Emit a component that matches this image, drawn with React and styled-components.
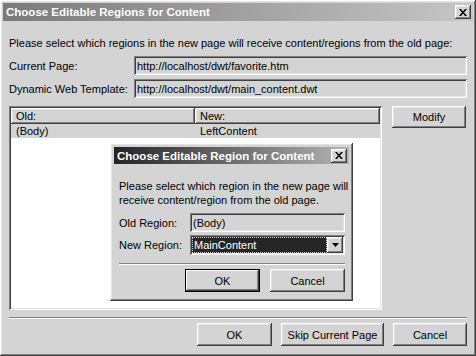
import React from 'react'
import styled, { createGlobalStyle, css } from 'styled-components'

const GlobalStyle = createGlobalStyle`
	html, body {
		margin: 0;
		padding: 0;
		background: #d4d4d4;
	}
	* {
		box-sizing: border-box;
	}
`

const raised = css`
	box-shadow: inset -1px -1px #404040, inset 1px 1px #ffffff,
		inset -2px -2px #808080, inset 2px 2px #e4e4e4;
`

const sunken = css`
	box-shadow: inset 1px 1px #808080, inset -1px -1px #ffffff,
		inset 2px 2px #404040, inset -2px -2px #e4e4e4;
`

const Window = styled.div`
	position: relative;
	width: 476px;
	height: 356px;
	padding: 3px;
	background: #d4d4d4;
	font-family: 'Liberation Sans', Arial, sans-serif;
	font-size: 11px;
	color: #000;
	display: flex;
	flex-direction: column;
	${raised};
`

const TitleBar = styled.div`
	height: ${(p) => p.$height}px;
	flex-shrink: 0;
	display: flex;
	align-items: center;
	justify-content: space-between;
	padding: 0 2px 0 3px;
	background: linear-gradient(to right, ${(p) => p.$from}, ${(p) => p.$to});
	color: #fff;
	font-weight: bold;
	font-size: 11.5px;
`

const CloseButton = styled.div`
	width: 16px;
	height: 14px;
	background: #d4d4d4;
	display: flex;
	align-items: center;
	justify-content: center;
	${raised};
`

const Body = styled.div`
	flex: 1;
	display: flex;
	flex-direction: column;
	padding: 0 6px;
`

const Intro = styled.div`
	margin-top: ${(p) => p.$top}px;
	line-height: 14px;
	white-space: nowrap;
`

const FieldRow = styled.div`
	display: grid;
	grid-template-columns: ${(p) => p.$label}px 1fr;
	align-items: center;
	height: ${(p) => p.$height}px;
	margin-top: ${(p) => p.$top}px;
`

const Field = styled.div`
	height: 100%;
	display: flex;
	align-items: center;
	padding: 0 3px;
	background: #d4d4d4;
	${sunken};
`

const Main = styled.div`
	display: flex;
	gap: 10px;
	margin-top: 8px;
	height: 204px;
`

const ListBox = styled.div`
	position: relative;
	width: 373px;
	height: 100%;
	background: #fff;
	padding: 2px;
	${sunken};
`

const ListRow = styled.div`
	display: grid;
	grid-template-columns: 184px 1fr;
	height: ${(p) => p.$height}px;
	background: ${(p) => (p.$selected ? '#d4d4d4' : 'transparent')};
`

const HeaderCell = styled.div`
	display: flex;
	align-items: center;
	padding: 0 5px;
	background: #d4d4d4;
	${raised};
`

const Cell = styled.div`
	display: flex;
	align-items: center;
	padding: 0 5px;
`

const Side = styled.div`
	display: flex;
	flex-direction: column;
`

const Button = styled.div`
	width: ${(p) => p.$width}px;
	height: ${(p) => p.$height || 23}px;
	display: flex;
	align-items: center;
	justify-content: center;
	background: #d4d4d4;
	${raised};
	${(p) =>
		p.$default &&
		css`
			box-shadow: inset 0 0 0 1px #000, inset -2px -2px #404040,
				inset 2px 2px #ffffff, inset -3px -3px #808080;
		`}
`

const Separator = styled.div`
	height: 2px;
	margin-top: ${(p) => p.$top}px;
	border-top: 1px solid #808080;
	border-bottom: 1px solid #ffffff;
`

const ButtonRow = styled.div`
	display: flex;
	justify-content: flex-end;
	gap: ${(p) => p.$gap}px;
	margin-top: ${(p) => p.$top}px;
`

const Dialog = styled.div`
	position: absolute;
	left: 101px;
	top: 37px;
	width: 243px;
	height: 158px;
	padding: 4px;
	background: #d4d4d4;
	display: flex;
	flex-direction: column;
	${raised};
`

const DialogBody = styled.div`
	display: flex;
	flex-direction: column;
	padding: 0 4px 0 5px;
`

const Select = styled.div`
	height: 100%;
	display: flex;
	padding: 2px;
	background: #fff;
	${sunken};
`

const SelectValue = styled.div`
	flex: 1;
	display: flex;
	align-items: center;
	padding: 0 2px;
	background: #262626;
	color: #fff;
	outline: 1px dotted #d4d4d4;
	outline-offset: -1px;
`

const SelectArrow = styled.div`
	width: 16px;
	display: flex;
	align-items: center;
	justify-content: center;
	background: #d4d4d4;
	${raised};
`

function CloseIcon() {
	return (
		<svg width='8' height='7' viewBox='0 0 8 7'>
			<path d='M0 0h2l2 2.5L6 0h2L5 3.5 8 7H6L4 4.5 2 7H0l3-3.5z' fill='#000' />
		</svg>
	)
}

export default function App() {
	return (
		<>
			<GlobalStyle />
			<Window>
				<TitleBar $height={18} $from='#7a7a7a' $to='#c6c6c6'>
					<span>Choose Editable Regions for Content</span>
					<CloseButton>
						<CloseIcon />
					</CloseButton>
				</TitleBar>
				<Body>
					<Intro $top={15}>
						Please select which regions in the new page will receive
						content/regions from the old page:
					</Intro>
					<FieldRow $label={125} $height={19} $top={6}>
						<span>Current Page:</span>
						<Field>http://localhost/dwt/favorite.htm</Field>
					</FieldRow>
					<FieldRow $label={125} $height={19} $top={4}>
						<span>Dynamic Web Template:</span>
						<Field>http://localhost/dwt/main_content.dwt</Field>
					</FieldRow>
					<Main>
						<ListBox>
							<ListRow $height={16}>
								<HeaderCell>Old:</HeaderCell>
								<HeaderCell>New:</HeaderCell>
							</ListRow>
							<ListRow $height={14} $selected>
								<Cell>(Body)</Cell>
								<Cell>LeftContent</Cell>
							</ListRow>
							<Dialog>
								<TitleBar $height={17} $from='#242424' $to='#b4b4b4'>
									<span>Choose Editable Region for Content</span>
									<CloseButton>
										<CloseIcon />
									</CloseButton>
								</TitleBar>
								<DialogBody>
									<Intro $top={15}>
										Please select which region in the new page will
										<br />
										receive content/region from the old page.
									</Intro>
									<FieldRow $label={71} $height={19} $top={6}>
										<span>Old Region:</span>
										<Field>(Body)</Field>
									</FieldRow>
									<FieldRow $label={71} $height={20} $top={3}>
										<span>New Region:</span>
										<Select>
											<SelectValue>MainContent</SelectValue>
											<SelectArrow>
												<svg width='7' height='4' viewBox='0 0 7 4'>
													<path d='M0 0h7L3.5 4z' fill='#000' />
												</svg>
											</SelectArrow>
										</Select>
									</FieldRow>
									<Separator $top={8} />
									<ButtonRow $gap={10} $top={4}>
										<Button $width={75} $default>
											OK
										</Button>
										<Button $width={75}>Cancel</Button>
									</ButtonRow>
								</DialogBody>
							</Dialog>
						</ListBox>
						<Side>
							<Button $width={74} $height={22}>
								Modify
							</Button>
						</Side>
					</Main>
					<Separator $top={7} />
					<ButtonRow $gap={9} $top={4}>
						<Button $width={75}>OK</Button>
						<Button $width={103}>Skip Current Page</Button>
						<Button $width={74}>Cancel</Button>
					</ButtonRow>
				</Body>
			</Window>
		</>
	)
}
